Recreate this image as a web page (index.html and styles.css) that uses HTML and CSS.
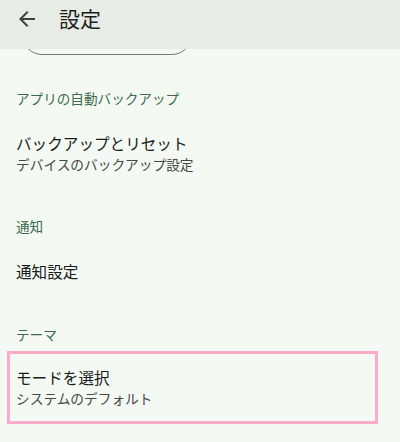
FILE: index.html
```html
<!DOCTYPE html>
<html lang="ja">
<head>
<meta charset="utf-8">
<link rel="stylesheet" href="styles.css">
</head>
<body>
<div class="screen">
  <header class="topbar">
    <svg class="back" viewBox="0 0 24 24" width="24" height="24"><path d="M20 11H7.83l5.59-5.59L12 4l-8 8 8 8 1.41-1.41L7.83 13H20v-2z" fill="#3f413f"/></svg>
    <h1 class="title">設定</h1>
  </header>
  <div class="pill-clip"><div class="pill"></div></div>

  <div class="cat first">アプリの自動バックアップ</div>
  <div class="item">
    <div class="item-title">バックアップとリセット</div>
    <div class="item-sub">デバイスのバックアップ設定</div>
  </div>

  <div class="cat">通知</div>
  <div class="item">
    <div class="item-title">通知設定</div>
  </div>

  <div class="cat">テーマ</div>
  <div class="item highlight">
    <div class="item-title">モードを選択</div>
    <div class="item-sub">システムのデフォルト</div>
  </div>
</div>
</body>
</html>
```
FILE: styles.css
```css
html, body {
  margin: 0;
  padding: 0;
  background: #f5f9f4;
}
body {
  font-family: "Noto Sans CJK JP", "Noto Sans", sans-serif;
  width: 400px;
  height: 442px;
  overflow: hidden;
}
.screen {
  display: flex;
  flex-direction: column;
}
.topbar {
  height: 49px;
  background: #e8ece7;
  display: flex;
  align-items: flex-start;
  padding-left: 15px;
  box-sizing: border-box;
}
.back {
  display: block;
  margin-top: 7px;
}
.title {
  margin: 3px 0 0 20px;
  font-size: 21px;
  line-height: 30px;
  font-weight: 400;
  color: #1b1d1b;
}
.pill-clip {
  height: 6px;
  overflow: hidden;
  display: flex;
  align-items: flex-end;
  padding-left: 22px;
}
.pill {
  width: 170px;
  height: 40px;
  flex: none;
  border: 1px solid #767a76;
  border-radius: 20px;
  box-sizing: border-box;
}
.cat {
  padding: 26px 16px 8px;
  font-size: 13.6px;
  line-height: 20px;
  color: #3b6a4c;
}
.cat.first {
  padding-top: 33px;
}
.item {
  padding: 16px;
}
.item-title {
  font-size: 15.6px;
  line-height: 22px;
  color: #191c1a;
}
.item-sub {
  font-size: 13.7px;
  line-height: 20px;
  color: #434843;
}
.highlight {
  margin: -1px 22px 0 7px;
  padding: 15px 16px 16px 9px;
  outline: 3px solid #ffaac9;
  outline-offset: -3px;
}
```
